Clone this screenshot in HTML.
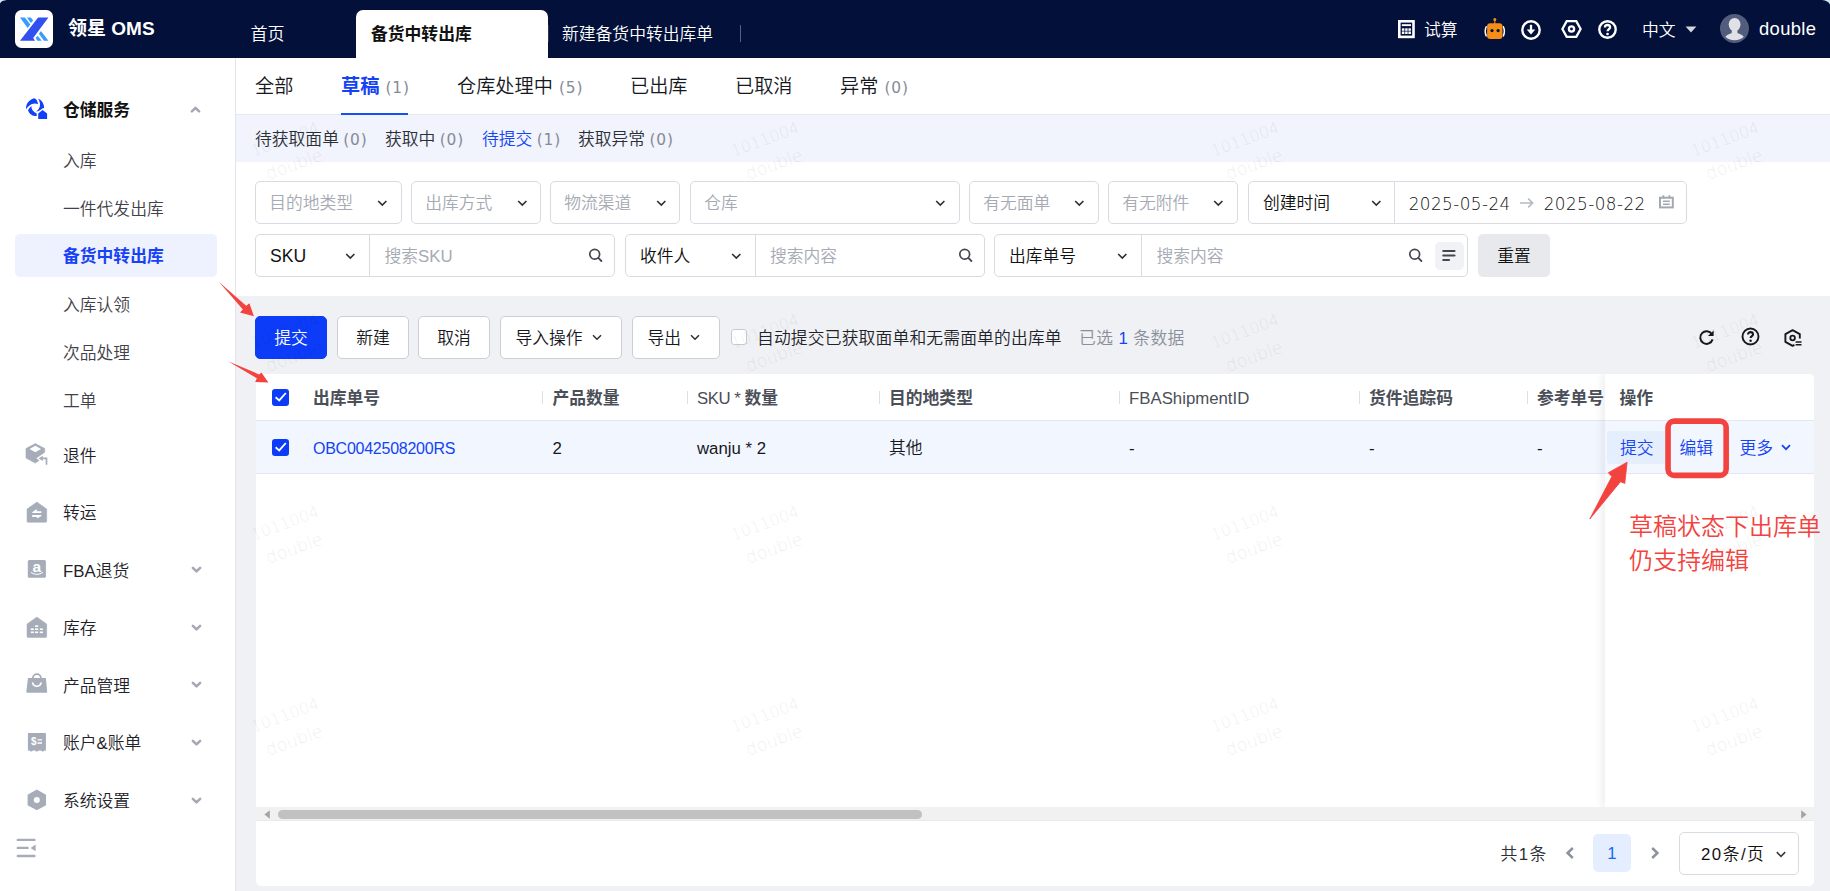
<!DOCTYPE html>
<html lang="zh-CN">
<head>
<meta charset="utf-8">
<title>领星 OMS - 备货中转出库</title>
<style>
*{box-sizing:border-box;margin:0;padding:0}
html,body{width:1830px;height:891px;overflow:hidden}
body{position:relative;background:#f0f1f5;font-family:"Liberation Sans","Noto Sans CJK SC",sans-serif;font-size:16.8px;font-weight:350;color:#1f2329;-webkit-font-smoothing:antialiased}
.abs{position:absolute}
svg{display:block;overflow:visible}
/* ---------- header ---------- */
#hd{position:absolute;left:0;top:0;width:1830px;height:58px;background:#02103a;color:#fff}
#logo{position:absolute;left:15px;top:10px;width:38px;height:38px;background:#fff;border-radius:6.500px}
#brand{position:absolute;left:68px;top:11px;height:36px;line-height:36px;font-size:19px;font-weight:700;white-space:nowrap;letter-spacing:0}
.htab{position:absolute;top:10px;height:48px;line-height:50.500px;font-size:16.8px;white-space:nowrap;color:#fff}
.htab.on{background:#fff;color:#111;font-weight:700;border-radius:7px 7px 0 0}
.hsep{position:absolute;top:25px;width:1px;height:17px;background:#59607c}
.hr{position:absolute;top:0;height:58px;line-height:61.500px;font-size:16.8px;color:#fff;white-space:nowrap}
/* ---------- sidebar ---------- */
#sb{position:absolute;left:0;top:58px;width:236px;height:833px;background:#fff;border-right:1px solid #e3e5ea}
.m1{position:absolute;left:63px;height:30px;line-height:32px;font-size:16.8px;color:#1f2329;white-space:nowrap}
.m2{position:absolute;left:63px;height:30px;line-height:31px;font-size:16.8px;color:#3f4349;white-space:nowrap}
.mic{position:absolute}
.chev{position:absolute;left:190px;width:12px;height:8px}

/* ---------- main ---------- */
#tabs{position:absolute;left:236px;top:58px;width:1594px;height:57px;background:#fff;border-bottom:1px solid #e6e8ee}
.tab{position:absolute;top:12px;height:34px;line-height:34px;font-size:19.2px;color:#16181d;white-space:nowrap}
.tab.on{color:#1443f3;font-weight:700}
.cnt{font-size:15.400px;color:#868b95;font-weight:400;letter-spacing:0.900px;font-family:"DejaVu Sans","Liberation Sans",sans-serif;margin-left:6px}
#sub{position:absolute;left:236px;top:115px;width:1594px;height:47px;background:#f1f3fd}
.st{position:absolute;top:8px;height:30px;line-height:33px;font-size:16.8px;color:#2b2f36;white-space:nowrap}
.st.on{color:#1443f3}
.st .cnt{margin-left:4.300px}
#flt{position:absolute;left:236px;top:162px;width:1594px;height:134px;background:#fff}
.sel{position:absolute;height:43px;border:1px solid #d8dbe1;border-radius:5px;background:#fff;line-height:44px;padding-left:13.200px;font-size:16.8px;color:#a6aab3;white-space:nowrap}
.sel.v{color:#111}
.sel svg.cv{position:absolute;top:17.5px}
.grp{position:absolute;height:43px;border:1px solid #d8dbe1;border-radius:5px;background:#fff}
.grp .dv{position:absolute;top:0;width:1px;height:41px;background:#d8dbe1}
.grp .t{position:absolute;top:0;height:41px;line-height:44px;font-size:16.800px;white-space:nowrap}
.ph{color:#a6aab3}
.bk{color:#111}

/* ---------- toolbar ---------- */
.btn{position:absolute;top:316px;height:43px;border:1px solid #cbced5;border-radius:5px;background:#fff;line-height:44px;font-size:16.800px;color:#16181d;text-align:center;white-space:nowrap}
.btn.pri{background:#0c3cf8;border-color:#0c3cf8;color:#fff}
/* ---------- table ---------- */
#card{position:absolute;left:255.500px;top:373.500px;width:1558.500px;height:512.500px;background:#fff;border-radius:5px;overflow:hidden}
.th{position:absolute;top:0;height:47px;line-height:50px;font-size:16.800px;font-weight:700;color:#4b4f57;white-space:nowrap}
.th .lt{font-weight:400}
.csep{position:absolute;top:17px;width:1px;height:13px;background:#dcdfe4}
.td{position:absolute;top:47.500px;height:52px;line-height:55.500px;font-size:16.800px;color:#16181d;white-space:nowrap}
.cb{position:absolute;width:17px;height:17px;background:#0c3cf8;border-radius:3px}
.lk{color:#1443f3}

/* ---------- watermark ---------- */
#wm{position:absolute;left:236px;top:58px;width:1594px;height:833px;overflow:hidden;pointer-events:none}
.wm{position:absolute;width:120px;height:56px;margin-left:-60px;margin-top:-28px;text-align:center;font-family:"DejaVu Sans","Liberation Sans",sans-serif;font-size:16px;line-height:27.400px;color:rgba(0,0,0,0.054);text-shadow:0 0 1.200px rgba(0,0,0,0.045);transform:rotate(-20deg);white-space:nowrap}
.wm i{font-style:normal;font-size:17.400px}
.corner{position:absolute;top:0;width:9px;height:9px;pointer-events:none}
</style>
</head>
<body>

<!-- ================= HEADER ================= -->
<div id="hd">
  <div id="logo">
    <svg width="38" height="38" viewBox="0 0 38 38">
      <polygon points="5,7.400 9.900,7.400 15.300,14.400 12.600,17.900" fill="#379bff"/>
      <polygon points="12,7.400 15.800,7.400 18.200,10.600 15.800,13" fill="#379bff"/>
      <polygon points="23.100,7.400 33.400,7.400 18.200,28.100 20.100,30.800 5,30.800" fill="#3150ef"/>
      <polygon points="26,21.100 33.400,30.800 29,30.800 23.900,23.800" fill="#379bff"/>
      <polygon points="22.500,25.700 26.800,30.800 22.500,30.800 20.600,28.100" fill="#379bff"/>
    </svg>
  </div>
  <div id="brand">领星 OMS</div>

  <div class="htab" style="left:250.500px;font-size:17px">首页</div>
  <div class="htab on" style="left:356px;width:192px;padding-left:15px">备货中转出库</div>
  <div class="hsep" style="left:548px;background:#2a3456"></div>
  <div class="htab" style="left:562px">新建备货中转出库单</div>
  <div class="hsep" style="left:740px"></div>

  <!-- right tools -->
  <svg class="abs" style="left:1398px;top:20px" width="17" height="18" viewBox="0 0 17 18">
    <rect x="1.300" y="1.300" width="14.200" height="15.600" fill="none" stroke="#fff" stroke-width="2.600"/>
    <rect x="3.800" y="4.200" width="9.200" height="1.900" fill="#fff"/>
    <g fill="#fff"><rect x="3.900" y="8.300" width="2.500" height="2.500"/><rect x="7.150" y="8.300" width="2.500" height="2.500"/><rect x="10.400" y="8.300" width="2.500" height="2.500"/>
    <rect x="3.900" y="11.500" width="2.500" height="2.500"/><rect x="7.150" y="11.500" width="2.500" height="2.500"/><rect x="10.400" y="11.500" width="2.500" height="2.500"/></g>
  </svg>
  <div class="hr" style="left:1424px">试算</div>
  <svg class="abs" style="left:1484px;top:18px" width="22" height="21" viewBox="0 0 22 21">
    <circle cx="10.800" cy="1.500" r="1.500" fill="#f58d16"/>
    <rect x="10.250" y="2" width="1.100" height="4" fill="#f58d16"/>
    <path d="M2.200 8.800Q0.200 13.300 2.200 17.900M19.400 8.800Q21.400 13.300 19.400 17.900" stroke="#fff" stroke-width="1.500" stroke-linecap="round" fill="none"/>
    <rect x="3.100" y="5.200" width="15.400" height="15.700" rx="3" fill="#f58d16"/>
    <circle cx="8" cy="12.600" r="1.600" fill="#02103a"/><circle cx="14.100" cy="12.600" r="1.600" fill="#02103a"/>
  </svg>
  <svg class="abs" style="left:1521px;top:19.5px" width="20" height="20" viewBox="0 0 20 20">
    <circle cx="10" cy="10" r="8.700" fill="none" stroke="#fff" stroke-width="2.400"/>
    <path d="M10 4.800v5.500" fill="none" stroke="#fff" stroke-width="2.300"/><path d="M5.700 9.400H14.300L10 14.400Z" fill="#fff"/>
  </svg>
  <svg class="abs" style="left:1561px;top:19px" width="21" height="20" viewBox="0 0 21 20">
    <polygon points="1.400,10 5.700,2.200 15.300,2.200 19.600,10 15.300,17.800 5.700,17.800" fill="none" stroke="#fff" stroke-width="2.300" stroke-linejoin="miter"/>
    <circle cx="10.500" cy="10" r="2.600" fill="none" stroke="#fff" stroke-width="2.300"/>
  </svg>
  <svg class="abs" style="left:1598px;top:19.5px" width="19" height="19" viewBox="0 0 19 19">
    <circle cx="9.500" cy="9.500" r="8.200" fill="none" stroke="#fff" stroke-width="2.400"/>
    <path d="M6.9 7.6c0-1.6 1.2-2.6 2.6-2.6s2.6 1 2.6 2.4c0 1.7-2.5 1.9-2.5 3.9" fill="none" stroke="#fff" stroke-width="2.300"/>
    <circle cx="9.550" cy="14" r="1.350" fill="#fff"/>
  </svg>
  <div class="hr" style="left:1642px">中文</div>
  <svg class="abs" style="left:1685px;top:26px" width="12" height="7" viewBox="0 0 12 7"><path d="M0.6 0.4h10.8L6 6.6z" fill="#d3d6de"/></svg>
  <svg class="abs" style="left:1720px;top:14px" width="29" height="29" viewBox="0 0 29 29">
    <defs><clipPath id="avc"><circle cx="14.5" cy="14.5" r="14.5"/></clipPath></defs>
    <circle cx="14.5" cy="14.5" r="14.5" fill="#525c7c"/>
    <g clip-path="url(#avc)" fill="#dfe1e7">
      <ellipse cx="14.600" cy="10.500" rx="5.900" ry="6.600"/>
      <path d="M11.8 15h5.6v3.4c0 1.2 5.6 2.2 6.4 4.4c-2 2.2-5.600 3.400-9.200 3.400s-7.200-1.200-9.200-3.400c0.800-2.200 6.400-3.200 6.400-4.400z"/>
    </g>
  </svg>
  <div class="hr" style="left:1759px;font-size:18.400px;line-height:58px;letter-spacing:0.350px">double</div>
</div>

<!-- ================= SIDEBAR ================= -->
<div id="sb">
  <!-- 仓储服务 (y rel to sidebar top = abs-58) -->
  <svg class="abs" style="left:20px;top:34px" width="36" height="33" viewBox="0 0 36 33">
    <g fill="#1140fa">
      <path d="M6.100 17.400C5.600 12.400 8.600 8 14.100 6.300C15.700 6.300 17.600 8.600 18.100 12.200C16 11.100 13.500 11.100 11.400 12.300C9.300 13.400 7.300 15.400 6.100 17.400Z"/>
      <path d="M17.900 6.800C21.300 7.700 23.800 11 24.200 15.900L22.300 16.400C20.800 17.900 18.700 19.400 16.200 19.500C18.400 18.200 19.800 15.700 20 13.300C20.200 10.700 19.300 8.400 17.900 6.800Z"/>
      <path d="M11.500 14.200C11.200 17.200 13 19.800 16.700 21.400L16.700 24.100C13.200 24.300 9.600 22.500 8 18.400C8.900 16.500 10 15.100 11.500 14.200Z"/>
      <path d="M22.600 17.900L27.100 21.500V26.400A0.500 0.500 0 0 1 26.600 26.900H18.700A0.500 0.500 0 0 1 18.200 26.400V21.500Z"/>
    </g>
  </svg>
  <div class="m1" style="top:37px;font-weight:700;color:#111">仓储服务</div>
  <svg class="abs" style="left:190px;top:48px" width="11" height="7" viewBox="0 0 11 7"><path d="M1.900 5.400L5.500 1.900L9.100 5.400" fill="none" stroke="#a4a9b4" stroke-width="2.600" stroke-linecap="round" stroke-linejoin="round"/></svg>

  <div class="m2" style="top:87.500px">入库</div>
  <div class="m2" style="top:135.500px">一件代发出库</div>
  <div class="abs" style="left:15px;top:176px;width:202px;height:42.500px;background:#eef2ff;border-radius:5px"></div>
  <div class="m2" style="top:182.500px;font-weight:700;color:#1843f5">备货中转出库</div>
  <div class="m2" style="top:231.500px">入库认领</div>
  <div class="m2" style="top:279.500px">次品处理</div>
  <div class="m2" style="top:327.500px">工单</div>

  <!-- 退件 -->
  <svg class="abs" style="left:16px;top:378px" width="50" height="40" viewBox="0 0 50 40">
    <path d="M19.300 7.600L28.700 12.500V16.300L20 22.300L23 24.500L19.300 27.100L10 22.100V12.500Z" fill="#a6acb8" stroke="#a6acb8" stroke-width="0.600" stroke-linejoin="round"/>
    <path d="M19.300 9.700L25.100 13L19.300 16.200L13.500 13Z" fill="#fff"/>
    <path d="M22.600 22.400L26.900 19.700V25Z" fill="#a6acb8"/>
    <path d="M26.500 22.350H30.500V28.800" fill="none" stroke="#a6acb8" stroke-width="1.700"/>
  </svg>
  <div class="m1" style="top:382.500px">退件</div>
  <!-- 转运 -->
  <svg class="abs" style="left:16px;top:436px" width="50" height="40" viewBox="0 0 50 40">
    <path d="M20.900 8.100L30.700 15V27.300A1 1 0 0 1 29.700 28.300H12A1 1 0 0 1 11 27.300V15Z" fill="#a6acb8" stroke="#a6acb8" stroke-width="0.500" stroke-linejoin="round"/>
    <path d="M16.200 19.100V18.200L20.700 15V17.300H25.400V19.100Z" fill="#fff"/>
    <path d="M25.400 21.100V22L21 24.500V22.900H16.200V21.100Z" fill="#fff"/>
  </svg>
  <div class="m1" style="top:440px">转运</div>
  <!-- FBA退货 -->
  <svg class="abs" style="left:16px;top:492px" width="50" height="40" viewBox="0 0 50 40">
    <rect x="11.800" y="10.100" width="18.100" height="17.700" rx="1.500" fill="#a6acb8"/>
    <text x="20.900" y="21.900" font-family="Liberation Sans,sans-serif" font-size="15.500" font-weight="700" fill="#fff" text-anchor="middle">a</text>
    <path d="M15.200 22.600Q20.900 26.400 26.700 22.600" fill="none" stroke="#fff" stroke-width="1" stroke-linecap="round"/>
  </svg>
  <div class="m1" style="top:497.500px">FBA退货</div>
  <svg class="abs" style="left:190.500px;top:508px" width="11" height="7" viewBox="0 0 11 7"><path d="M1.900 1.900L5.500 5.400L9.100 1.900" fill="none" stroke="#a4a9b4" stroke-width="2.600" stroke-linecap="round" stroke-linejoin="round"/></svg>
  <!-- 库存 -->
  <svg class="abs" style="left:16px;top:550px" width="50" height="40" viewBox="0 0 50 40">
    <path d="M20.900 9L30.700 16.100V28.400A1 1 0 0 1 29.700 29.400H12A1 1 0 0 1 11 28.400V16.100Z" fill="#a6acb8" stroke="#a6acb8" stroke-width="0.500" stroke-linejoin="round"/>
    <g fill="#fff"><rect x="19.100" y="17.300" width="3.100" height="1.600"/>
    <rect x="14.800" y="20.400" width="3.100" height="1.600"/><rect x="19.100" y="20.400" width="3.100" height="1.600"/><rect x="23.800" y="20.400" width="3.100" height="1.600"/>
    <rect x="14.800" y="23.500" width="3.100" height="1.600"/><rect x="19.100" y="23.500" width="3.100" height="1.600"/><rect x="23.800" y="23.500" width="3.100" height="1.600"/></g>
  </svg>
  <div class="m1" style="top:555px">库存</div>
  <svg class="abs" style="left:190.5px;top:566px" width="11" height="7" viewBox="0 0 11 7"><path d="M1.900 1.900L5.500 5.400L9.100 1.900" fill="none" stroke="#a4a9b4" stroke-width="2.600" stroke-linecap="round" stroke-linejoin="round"/></svg>
  <!-- 产品管理 -->
  <svg class="abs" style="left:16px;top:607px" width="50" height="40" viewBox="0 0 50 40">
    <path d="M16.900 13.600V13.200A4 4 0 0 1 24.900 13.200V13.600" fill="none" stroke="#a6acb8" stroke-width="1.800"/>
    <path d="M12.500 13H29.300A0.600 0.600 0 0 1 29.900 13.500L31.200 27.100A0.700 0.700 0 0 1 30.500 27.800H11A0.700 0.700 0 0 1 10.300 27.100L11.900 13.500A0.600 0.600 0 0 1 12.500 13Z" fill="#a6acb8"/>
    <path d="M16.700 18.100A4.300 4.300 0 0 0 25 18.100" fill="none" stroke="#fff" stroke-width="1.700" stroke-linecap="round"/>
  </svg>
  <div class="m1" style="top:612.500px">产品管理</div>
  <svg class="abs" style="left:190.5px;top:623px" width="11" height="7" viewBox="0 0 11 7"><path d="M1.900 1.900L5.500 5.400L9.100 1.900" fill="none" stroke="#a4a9b4" stroke-width="2.600" stroke-linecap="round" stroke-linejoin="round"/></svg>
  <!-- 账户&账单 -->
  <svg class="abs" style="left:16px;top:665px" width="50" height="40" viewBox="0 0 50 40">
    <path d="M12.600 10.100H29.200A0.700 0.700 0 0 1 29.900 10.800V27.800L28.400 27.600Q26.800 29.600 24.800 27.600H23Q20.900 29.600 18.800 27.600H17Q15 29.600 13.400 27.600L11.900 27.800V10.800A0.700 0.700 0 0 1 12.600 10.100Z" fill="#a6acb8"/>
    <text x="17.700" y="22" font-family="Liberation Sans,sans-serif" font-size="10" font-weight="700" fill="#fff" text-anchor="middle">$</text>
    <path d="M21.500 16.850H26M21.500 20H26" stroke="#fff" stroke-width="1.350" fill="none"/>
  </svg>
  <div class="m1" style="top:670px">账户&amp;账单</div>
  <svg class="abs" style="left:190.5px;top:681px" width="11" height="7" viewBox="0 0 11 7"><path d="M1.900 1.900L5.500 5.400L9.100 1.900" fill="none" stroke="#a4a9b4" stroke-width="2.600" stroke-linecap="round" stroke-linejoin="round"/></svg>
  <!-- 系统设置 -->
  <svg class="abs" style="left:26px;top:731px" width="22" height="22" viewBox="0 0 22 22">
    <path d="M10.800 1.400L19.200 6.100V15.700L10.800 20.400L2.400 15.700V6.100Z" fill="#a6acb8" stroke="#a6acb8" stroke-width="1.600" stroke-linejoin="round"/>
    <circle cx="10.800" cy="10.900" r="3" fill="#fff"/>
  </svg>
  <div class="m1" style="top:727.500px">系统设置</div>
  <svg class="abs" style="left:190.5px;top:738.5px" width="11" height="7" viewBox="0 0 11 7"><path d="M1.900 1.900L5.500 5.400L9.100 1.900" fill="none" stroke="#a4a9b4" stroke-width="2.600" stroke-linecap="round" stroke-linejoin="round"/></svg>
  <!-- collapse -->
  <svg class="abs" style="left:16px;top:780px" width="21" height="20" viewBox="0 0 21 20">
    <path d="M1.800 1.900H18.400M1.800 9.900H11.600M1.800 18H18.400" stroke="#a6acb8" stroke-width="2.400" stroke-linecap="round" fill="none"/>
    <path d="M19.600 6.500V13.300L14.600 9.900z" fill="#a6acb8"/>
  </svg>
</div>

<!-- ================= MAIN ================= -->
<div id="tabs">
  <div class="tab" style="left:19px">全部</div>
  <div class="tab on" style="left:105px">草稿<span class="cnt">(1)</span></div>
  <div class="abs" style="left:105.400px;top:54.700px;width:67px;height:2.400px;background:#1a4ef5"></div>
  <div class="tab" style="left:221px">仓库处理中<span class="cnt">(5)</span></div>
  <div class="tab" style="left:394px">已出库</div>
  <div class="tab" style="left:499px">已取消</div>
  <div class="tab" style="left:604px">异常<span class="cnt">(0)</span></div>
</div>
<div id="sub">
  <div class="st" style="left:19px">待获取面单<span class="cnt">(0)</span></div>
  <div class="st" style="left:149px">获取中<span class="cnt">(0)</span></div>
  <div class="st on" style="left:246px">待提交<span class="cnt">(1)</span></div>
  <div class="st" style="left:342px">获取异常<span class="cnt">(0)</span></div>
</div>
<div id="flt">
  <!-- row 1 (top abs 181 => rel 19) -->
  <div class="sel" style="left:19px;top:19px;width:147px">目的地类型<svg class="cv abs" style="left:121.5px" width="10" height="7" viewBox="0 0 10 7"><path d="M0.200 1L4.300 5.100L8.400 1" fill="none" stroke="#2b2f36" stroke-width="1.600" stroke-linecap="butt" stroke-linejoin="miter"/></svg></div>
  <div class="sel" style="left:175px;top:19px;width:130px">出库方式<svg class="cv abs" style="left:105.5px" width="10" height="7" viewBox="0 0 10 7"><path d="M0.200 1L4.300 5.100L8.400 1" fill="none" stroke="#2b2f36" stroke-width="1.600" stroke-linecap="butt" stroke-linejoin="miter"/></svg></div>
  <div class="sel" style="left:314px;top:19px;width:130px">物流渠道<svg class="cv abs" style="left:105.5px" width="10" height="7" viewBox="0 0 10 7"><path d="M0.200 1L4.300 5.100L8.400 1" fill="none" stroke="#2b2f36" stroke-width="1.600" stroke-linecap="butt" stroke-linejoin="miter"/></svg></div>
  <div class="sel" style="left:454px;top:19px;width:270px">仓库<svg class="cv abs" style="left:245px" width="10" height="7" viewBox="0 0 10 7"><path d="M0.200 1L4.300 5.100L8.400 1" fill="none" stroke="#2b2f36" stroke-width="1.600" stroke-linecap="butt" stroke-linejoin="miter"/></svg></div>
  <div class="sel" style="left:733px;top:19px;width:130px">有无面单<svg class="cv abs" style="left:105px" width="10" height="7" viewBox="0 0 10 7"><path d="M0.200 1L4.300 5.100L8.400 1" fill="none" stroke="#2b2f36" stroke-width="1.600" stroke-linecap="butt" stroke-linejoin="miter"/></svg></div>
  <div class="sel" style="left:872px;top:19px;width:130px">有无附件<svg class="cv abs" style="left:105px" width="10" height="7" viewBox="0 0 10 7"><path d="M0.200 1L4.300 5.100L8.400 1" fill="none" stroke="#2b2f36" stroke-width="1.600" stroke-linecap="butt" stroke-linejoin="miter"/></svg></div>
  <div class="grp" style="left:1012px;top:19px;width:438.500px">
    <div class="t bk" style="left:14px">创建时间</div><svg class="cv abs" style="left:122.5px;top:17.5px" width="10" height="7" viewBox="0 0 10 7"><path d="M0.200 1L4.300 5.100L8.400 1" fill="none" stroke="#2b2f36" stroke-width="1.600" stroke-linecap="butt" stroke-linejoin="miter"/></svg>
    <div class="dv" style="left:145px"></div>
    <div class="t bk" style="left:159.700px;font-family:'DejaVu Sans','Liberation Sans',sans-serif;font-size:16.800px;letter-spacing:0.450px;line-height:45px">2025-05-24</div>
    <svg class="abs" style="left:270px;top:14.500px" width="16" height="12" viewBox="0 0 16 12"><path d="M1 6h12.600M9.200 1.600L13.600 6L9.200 10.400" fill="none" stroke="#b6bac2" stroke-width="1.700"/></svg>
    <div class="t bk" style="left:294.700px;font-family:'DejaVu Sans','Liberation Sans',sans-serif;font-size:16.800px;letter-spacing:0.450px;line-height:45px">2025-08-22</div>
    <svg class="abs" style="left:410px;top:13.200px" width="15" height="14" viewBox="0 0 15 14"><rect x="1" y="2.700" width="12.800" height="9.700" fill="none" stroke="#a4a8b2" stroke-width="2"/><path d="M4.400 0.200v3.300M10.400 0.200v3.300" stroke="#a4a8b2" stroke-width="1.800" fill="none"/><path d="M4 6.300h6.800M4 9.200h6.800" stroke="#a4a8b2" stroke-width="1.500" fill="none"/></svg>
  </div>
  <!-- row 2 (top abs 234.5 => rel 72.5) -->
  <div class="grp" style="left:19px;top:72px;width:360px">
    <div class="t bk" style="left:14px;line-height:43px;font-size:17.600px">SKU</div><svg class="cv abs" style="left:90.0px;top:17.5px" width="10" height="7" viewBox="0 0 10 7"><path d="M0.200 1L4.300 5.100L8.400 1" fill="none" stroke="#2b2f36" stroke-width="1.600" stroke-linecap="butt" stroke-linejoin="miter"/></svg>
    <div class="dv" style="left:113px"></div>
    <div class="t ph" style="left:128.500px">搜索SKU</div>
    <svg class="abs" style="left:332.5px;top:12.5px" width="15" height="15" viewBox="0 0 15 15"><circle cx="5.700" cy="6.300" r="4.900" fill="none" stroke="#44474f" stroke-width="1.700"/><path d="M9.300 9.900L12.400 13" stroke="#44474f" stroke-width="1.800" stroke-linecap="round"/></svg>
  </div>
  <div class="grp" style="left:389px;top:72px;width:360px">
    <div class="t bk" style="left:14px">收件人</div><svg class="cv abs" style="left:105.5px;top:17.5px" width="10" height="7" viewBox="0 0 10 7"><path d="M0.200 1L4.300 5.100L8.400 1" fill="none" stroke="#2b2f36" stroke-width="1.600" stroke-linecap="butt" stroke-linejoin="miter"/></svg>
    <div class="dv" style="left:128.500px"></div>
    <div class="t ph" style="left:144px">搜索内容</div>
    <svg class="abs" style="left:332.5px;top:13px" width="15" height="15" viewBox="0 0 15 15"><circle cx="5.700" cy="6.300" r="4.900" fill="none" stroke="#44474f" stroke-width="1.700"/><path d="M9.300 9.900L12.400 13" stroke="#44474f" stroke-width="1.800" stroke-linecap="round"/></svg>
  </div>
  <div class="grp" style="left:758px;top:72px;width:474px">
    <div class="t bk" style="left:14px">出库单号</div><svg class="cv abs" style="left:123px;top:17.5px" width="10" height="7" viewBox="0 0 10 7"><path d="M0.200 1L4.300 5.100L8.400 1" fill="none" stroke="#2b2f36" stroke-width="1.600" stroke-linecap="butt" stroke-linejoin="miter"/></svg>
    <div class="dv" style="left:146px"></div>
    <div class="t ph" style="left:161.500px">搜索内容</div>
    <svg class="abs" style="left:413.5px;top:13px" width="15" height="15" viewBox="0 0 15 15"><circle cx="5.700" cy="6.300" r="4.900" fill="none" stroke="#44474f" stroke-width="1.700"/><path d="M9.300 9.900L12.400 13" stroke="#44474f" stroke-width="1.800" stroke-linecap="round"/></svg>
    <div class="abs" style="left:440px;top:6.500px;width:29px;height:28px;background:#f1f2f5;border-radius:5px"></div>
    <svg class="abs" style="left:446px;top:14.200px" width="16" height="14" viewBox="0 0 16 14"><path d="M2.300 2H13.500M2.300 6.500H13.500M2.300 11H8" stroke="#44474f" stroke-width="2.200" stroke-linecap="round" fill="none"/></svg>
  </div>
  <div class="abs" style="left:1242px;top:72px;width:72px;height:43px;background:#e8e9ec;border-radius:5px;line-height:46px;text-align:center;font-size:16.800px;color:#111">重置</div>
</div>

<!-- ================= TOOLBAR ================= -->
<div class="btn pri" style="left:255px;width:72px">提交</div>
<div class="btn" style="left:337px;width:72px">新建</div>
<div class="btn" style="left:418px;width:72px">取消</div>
<div class="btn" style="left:500px;width:121.500px;text-align:left;padding-left:14.500px">导入操作<svg class="abs" style="left:90.500px;top:17px" width="10" height="7" viewBox="0 0 10 7"><path d="M1 1.200L5 5.200L9 1.200" fill="none" stroke="#2b2f36" stroke-width="1.500"/></svg></div>
<div class="btn" style="left:632px;width:87.500px;text-align:left;padding-left:14.500px">导出<svg class="abs" style="left:56.500px;top:17px" width="10" height="7" viewBox="0 0 10 7"><path d="M1 1.200L5 5.200L9 1.200" fill="none" stroke="#2b2f36" stroke-width="1.500"/></svg></div>
<div class="abs" style="left:731px;top:329px;width:16px;height:16px;border:1px solid #c6cad2;border-radius:3px;background:#fff"></div>
<div class="abs" style="left:757px;top:322px;height:32px;line-height:34.500px;font-size:16.800px;color:#1f2329;white-space:nowrap;letter-spacing:0.150px">自动提交已获取面单和无需面单的出库单</div>
<div class="abs" style="left:1079px;top:322px;height:32px;line-height:34.500px;font-size:16.800px;color:#8a8f99;white-space:nowrap;letter-spacing:0.400px">已选 <span style="color:#1443f3">1</span> 条数据</div>
<!-- toolbar icons -->
<svg class="abs" style="left:1698px;top:329px" width="17" height="17" viewBox="0 0 17 17">
  <path d="M13.900 5.200A6.300 6.300 0 1 0 14.600 10.400" fill="none" stroke="#16181d" stroke-width="2"/>
  <path d="M15.600 1.400V7H10z" fill="#16181d"/>
</svg>
<svg class="abs" style="left:1741px;top:327px" width="19" height="19" viewBox="0 0 19 19">
  <circle cx="9.500" cy="9.500" r="8" fill="none" stroke="#16181d" stroke-width="1.900"/>
  <path d="M7 7.600c0-1.500 1.100-2.500 2.500-2.500s2.500 0.900 2.500 2.300c0 1.700-2.400 1.800-2.400 3.700" fill="none" stroke="#16181d" stroke-width="2.100"/>
  <circle cx="9.550" cy="13.700" r="1.250" fill="#16181d"/>
</svg>
<svg class="abs" style="left:1784px;top:329px" width="19" height="18" viewBox="0 0 19 18">
  <path d="M10.400 15.900L8.600 16.900L1.400 12.900V5.100L8.600 1.200L15.800 5.100V9.600" fill="none" stroke="#16181d" stroke-width="1.900" stroke-linejoin="round"/>
  <circle cx="8.600" cy="9" r="2.300" fill="none" stroke="#16181d" stroke-width="1.800"/>
  <path d="M11.600 13H17.500M11.600 15.700H17.500" stroke="#16181d" stroke-width="1.600" fill="none"/>
</svg>

<!-- ================= TABLE CARD ================= -->
<div id="card">
  <!-- header -->
  <div class="cb" style="left:16px;top:15px"><svg width="17" height="17" viewBox="0 0 17 17"><path d="M3.600 8.300L7.200 11.400L13.800 4" fill="none" stroke="#fff" stroke-width="1.800"/></svg></div>
  <div class="th" style="left:57.500px">出库单号</div>
  <div class="csep" style="left:286px"></div>
  <div class="th" style="left:297px">产品数量</div>
  <div class="csep" style="left:431.500px"></div>
  <div class="th" style="left:441.500px"><span class="lt" style="letter-spacing:-0.500px">SKU * </span>数量</div>
  <div class="csep" style="left:623.500px"></div>
  <div class="th" style="left:633.500px">目的地类型</div>
  <div class="csep" style="left:863.500px"></div>
  <div class="th" style="left:873.500px"><span class="lt">FBAShipmentID</span></div>
  <div class="csep" style="left:1103.500px"></div>
  <div class="th" style="left:1113.500px">货件追踪码</div>
  <div class="csep" style="left:1271.500px"></div>
  <div class="th" style="left:1281.500px">参考单号</div>
  <div class="abs" style="left:0;top:46.500px;width:1558.500px;height:1px;background:#e6e8ed"></div>
  <!-- row -->
  <div class="abs" style="left:0;top:47.500px;width:1558.500px;height:52px;background:#f1f6ff"></div>
  <div class="abs" style="left:0;top:99.500px;width:1558.500px;height:1px;background:#e3e6ec"></div>
  <div class="cb" style="left:16px;top:65px"><svg width="17" height="17" viewBox="0 0 17 17"><path d="M3.600 8.300L7.200 11.400L13.800 4" fill="none" stroke="#fff" stroke-width="1.800"/></svg></div>
  <div class="td lk" style="left:57.500px;font-size:16px;letter-spacing:-0.250px">OBC0042508200RS</div>
  <div class="td" style="left:297px">2</div>
  <div class="td" style="left:441.500px">wanju * 2</div>
  <div class="td" style="left:633.500px;line-height:56px">其他</div>
  <div class="td" style="left:873.500px">-</div>
  <div class="td" style="left:1113.500px">-</div>
  <div class="td" style="left:1281.500px">-</div>
  <!-- fixed right column -->
  <div class="abs" style="left:1349.500px;top:0;width:209px;height:433px;background:#fff;box-shadow:-3px 0 8px rgba(20,30,60,0.080)"></div>
  <div class="abs" style="left:1349.500px;top:46.500px;width:209px;height:1px;background:#e6e8ed"></div>
  <div class="abs" style="left:1349.500px;top:47.500px;width:209px;height:52px;background:#f1f6ff"></div>
  <div class="abs" style="left:1349.500px;top:99.500px;width:209px;height:1px;background:#e3e6ec"></div>
  <div class="th" style="left:1364px">操作</div>
  <div class="abs" style="left:1351.500px;top:57.500px;width:59.500px;height:32.500px;background:#e5eefd;border-radius:4px"></div>
  <div class="td lk" style="left:1364.500px;line-height:55.500px">提交</div>
  <div class="td lk" style="left:1424px;line-height:55.500px">编辑</div>
  <div class="td lk" style="left:1484px;line-height:55.500px">更多</div>
  <svg class="abs" style="left:1525px;top:70.500px" width="10" height="7" viewBox="0 0 10 7"><path d="M1 1.200L5 5.200L9 1.200" fill="none" stroke="#1443f3" stroke-width="1.700"/></svg>
  <!-- h scrollbar -->
  <div class="abs" style="left:0;top:433px;width:1558.500px;height:14.500px;background:#f1f1f1;border-bottom:1px solid #e8eaee"></div>
  <svg class="abs" style="left:8px;top:436.500px" width="6" height="9" viewBox="0 0 6 9"><path d="M5.800 0.200V8.800L0.400 4.500z" fill="#a3a3a3"/></svg>
  <svg class="abs" style="left:1545.500px;top:436.500px" width="6" height="9" viewBox="0 0 6 9"><path d="M0.200 0.200V8.800L5.600 4.500z" fill="#a3a3a3"/></svg>
  <div class="abs" style="left:22px;top:436px;width:644px;height:9.500px;background:#c1c1c1;border-radius:5px"></div>
  <!-- pagination -->
  <div class="abs" style="left:1245px;top:464px;height:32px;line-height:34.500px;font-size:16.800px;color:#2b2f36;white-space:nowrap;letter-spacing:1.400px">共1条</div>
  <svg class="abs" style="left:1309.500px;top:472px" width="10" height="14" viewBox="0 0 10 14"><path d="M7.800 2L2.600 7L7.800 12" fill="none" stroke="#8d929c" stroke-width="2.500"/></svg>
  <div class="abs" style="left:1337.500px;top:460.500px;width:38px;height:38px;background:#e5eefe;border-radius:5px;line-height:40px;text-align:center;font-size:16.800px;color:#1768f5">1</div>
  <svg class="abs" style="left:1394px;top:472px" width="10" height="14" viewBox="0 0 10 14"><path d="M2.200 2L7.400 7L2.200 12" fill="none" stroke="#8d929c" stroke-width="2.500"/></svg>
  <div class="abs" style="left:1423.500px;top:458.500px;width:119.500px;height:43px;border:1px solid #d8dbe1;border-radius:5px;line-height:44px;padding-left:21px;font-size:16.800px;color:#111;white-space:nowrap;letter-spacing:1.500px">20条/页<svg class="abs" style="left:96px;top:17.500px" width="10" height="7" viewBox="0 0 10 7"><path d="M0.800 1.100L5 5.300L9.200 1.100" fill="none" stroke="#3a3d44" stroke-width="1.600"/></svg></div>
</div>

<!-- ================= ANNOTATIONS ================= -->
<svg class="abs" style="left:0;top:0;pointer-events:none" width="1830" height="891" viewBox="0 0 1830 891">
  <g fill="#f3433f">
    <!-- arrow 1 -> 提交 -->
    <path d="M219 282.100L246.200 305.700L249.400 303.200L253.900 316.300L240 312.500L242.900 309.600z"/>
    <!-- arrow 2 -> checkbox -->
    <path d="M228.100 361.300L259.100 374.400L261.400 372.500L268.400 382.500L255.200 381.900L256.800 378.300z"/>
    <!-- arrow 3 -> 编辑 -->
    <path d="M1589.800 519L1611.800 476.600L1608.300 472.700L1627.100 462.200L1624.800 483.400L1620.500 481.700z" stroke="#f3433f" stroke-width="0.800" stroke-linejoin="round"/>
  </g>
  <rect x="1668.050" y="421.100" width="58.100" height="54.300" rx="6.200" ry="6.200" fill="none" stroke="#f3433f" stroke-width="5.600"/>
</svg>
<div class="abs" style="left:1629px;top:509.500px;font-size:24px;line-height:34.800px;color:#f3433f;white-space:nowrap">草稿状态下出库单<br>仍支持编辑</div>

<!-- ================= WATERMARK ================= -->
<div id="wm">
  <div class="wm" style="left:54px;top:94.5px">1011004<br><i>double</i></div>
  <div class="wm" style="left:534px;top:94.5px">1011004<br><i>double</i></div>
  <div class="wm" style="left:1014px;top:94.5px">1011004<br><i>double</i></div>
  <div class="wm" style="left:1494px;top:94.5px">1011004<br><i>double</i></div>
  <div class="wm" style="left:54px;top:286.8px">1011004<br><i>double</i></div>
  <div class="wm" style="left:534px;top:286.8px">1011004<br><i>double</i></div>
  <div class="wm" style="left:1014px;top:286.8px">1011004<br><i>double</i></div>
  <div class="wm" style="left:1494px;top:286.8px">1011004<br><i>double</i></div>
  <div class="wm" style="left:54px;top:478.79999999999995px">1011004<br><i>double</i></div>
  <div class="wm" style="left:534px;top:478.79999999999995px">1011004<br><i>double</i></div>
  <div class="wm" style="left:1014px;top:478.79999999999995px">1011004<br><i>double</i></div>
  <div class="wm" style="left:1494px;top:478.79999999999995px">1011004<br><i>double</i></div>
  <div class="wm" style="left:54px;top:671px">1011004<br><i>double</i></div>
  <div class="wm" style="left:534px;top:671px">1011004<br><i>double</i></div>
  <div class="wm" style="left:1014px;top:671px">1011004<br><i>double</i></div>
  <div class="wm" style="left:1494px;top:671px">1011004<br><i>double</i></div>
</div>
<svg class="abs" style="left:0;top:0;pointer-events:none" width="8" height="5" viewBox="0 0 8 5"><path d="M0 0H6.800Q1.800 0.500 0 3.400Z" fill="#cde6ea"/></svg>
<svg class="abs" style="left:1821px;top:0;pointer-events:none" width="9" height="6" viewBox="0 0 9 6"><path d="M9 0H1Q7.200 0.700 9 4.500Z" fill="#cde6ea"/></svg>

</body>
</html>
